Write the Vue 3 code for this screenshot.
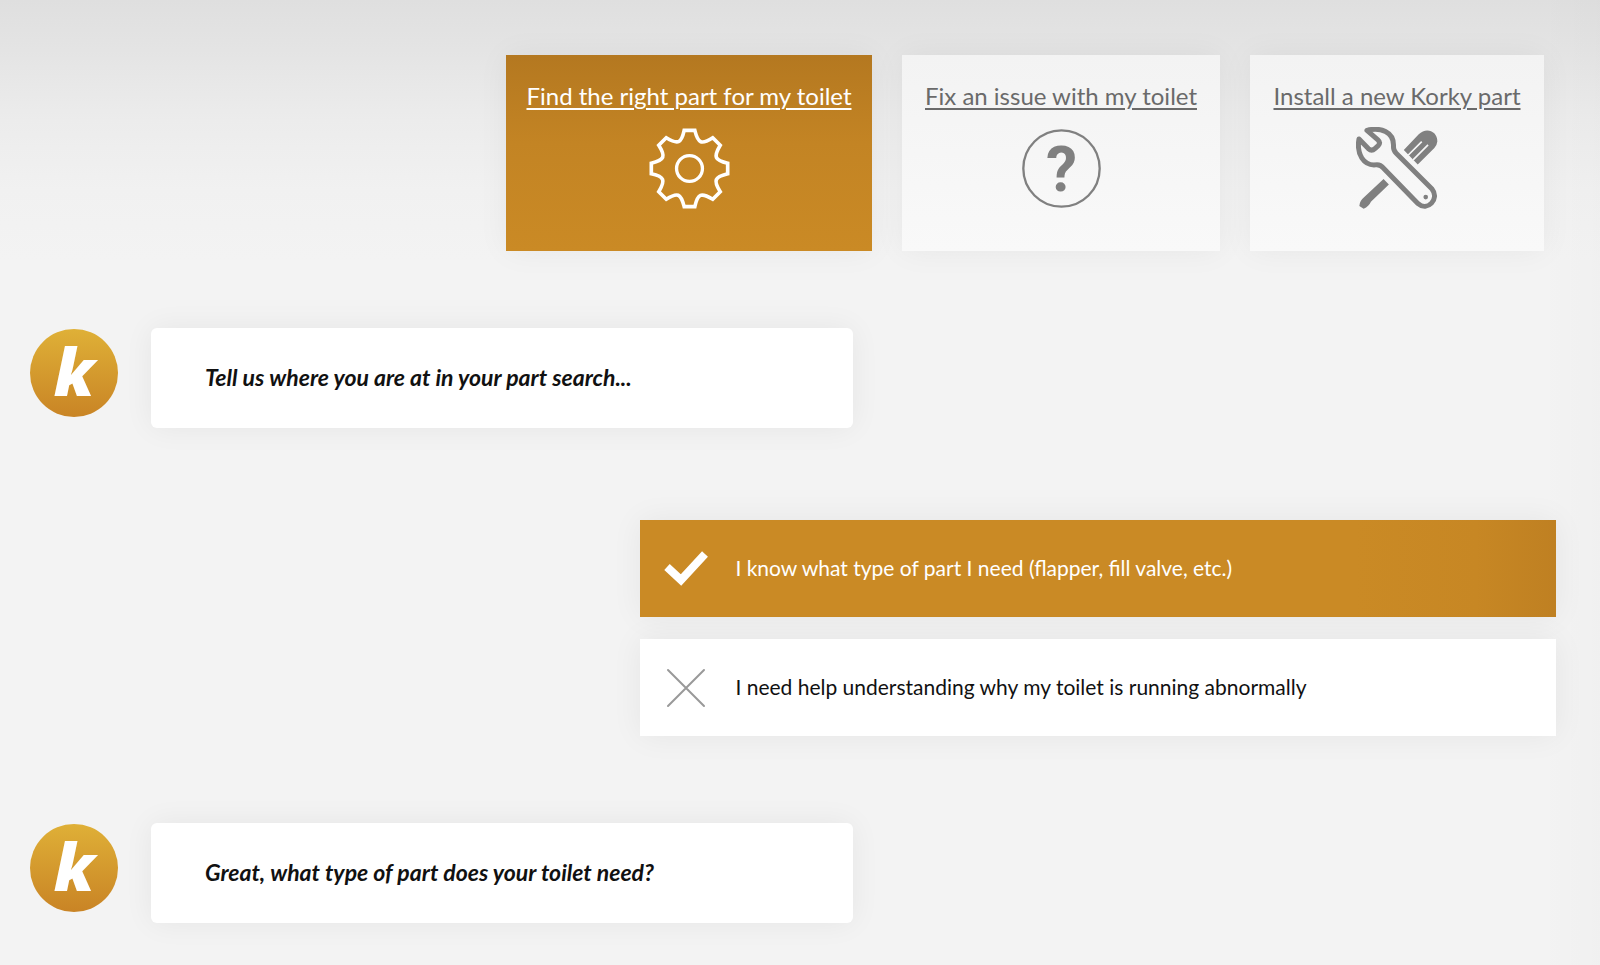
<template>
  <div class="page">
    <!-- topics -->
    <nav class="topics">
      <a
        v-for="topic in topics"
        :key="topic.icon"
        href="#"
        class="topic"
        :class="[topic.icon, { active: topic.icon === activeTopic }]"
        @click.prevent="activeTopic = topic.icon"
      >
        <span class="topic-label">{{ topic.label }}</span>

        <svg v-if="topic.icon === 'gear'" class="topic-icon" viewBox="-125 -125 250 250" aria-hidden="true">
          <path :d="gearPath" fill="none" stroke="currentColor" stroke-width="11" />
          <circle r="39" fill="none" stroke="currentColor" stroke-width="10" />
        </svg>

        <svg v-else-if="topic.icon === 'help'" class="topic-icon" viewBox="-125 -125 250 250" aria-hidden="true">
          <circle r="115" fill="none" stroke="currentColor" stroke-width="7" />
          <text class="mark" y="67" text-anchor="middle" fill="currentColor">?</text>
        </svg>

        <svg v-else class="topic-icon" viewBox="377 260 250 250" aria-hidden="true">
          <path
            d="M410 270 C450 260 492 274 490 318 Q489 330 498 339 L606 447 C630 476 592 516 564 491 L460 384 Q450 372 436 374 C400 377 378 342 386 296 L414 325 Q424 334 434 325 L444 316 Q452 307 443 299 Z"
            fill="none"
            stroke="currentColor"
            stroke-width="15"
            stroke-linejoin="round"
          />
          <circle cx="587" cy="471" r="7" fill="currentColor" />
          <path d="M521 329 L566 282 C588 259 623 272 622 304 Q621 315 613 323 L563 373 Z" fill="currentColor" />
          <path d="M534 345 L575 304 M549 359 L594 314" class="groove" />
          <path d="M460 417 L476 433 L422 485 Q416 499 400 506 L387 498 Q388 482 402 471 Z" fill="currentColor" />
        </svg>
      </a>
    </nav>

    <!-- chat -->
    <main class="chat">
      <div class="question">
        <span class="avatar">k</span>
        <p class="bubble">Tell us where you are at in your part search...</p>
      </div>

      <div class="answers">
        <button
          v-for="(answer, i) in answers"
          :key="answer"
          type="button"
          class="answer"
          :class="{ selected: i === selected }"
          @click="selected = i"
        >
          <svg class="answer-icon" viewBox="0 0 44 44" aria-hidden="true">
            <path v-if="i === selected" d="M3 21 L17 34 L41 8" fill="none" stroke="currentColor" stroke-width="8" />
            <path v-else d="M4 5 L40 41 M40 5 L4 41" class="cross" />
          </svg>
          <span>{{ answer }}</span>
        </button>
      </div>

      <div class="question">
        <span class="avatar">k</span>
        <p class="bubble">Great, what type of part does your toilet need?</p>
      </div>
    </main>
  </div>
</template>

<script setup>
import { ref } from 'vue'

const topics = [
  { icon: 'gear', label: 'Find the right part for my toilet' },
  { icon: 'help', label: 'Fix an issue with my toilet' },
  { icon: 'tools', label: 'Install a new Korky part' }
]

const answers = [
  'I know what type of part I need (flapper, fill valve, etc.)',
  'I need help understanding why my toilet is running abnormally'
]

const activeTopic = ref('gear')
const selected = ref(0)

// one tooth and the hollow after it, turned by 45° eight times
const turn = (x, y, step) => {
  const a = (step * Math.PI) / 4
  const rx = x * Math.cos(a) - y * Math.sin(a)
  const ry = x * Math.sin(a) + y * Math.cos(a)
  return `${rx.toFixed(1)} ${ry.toFixed(1)}`
}

const gearPath = Array.from({ length: 8 }, (_, i) => {
  const start = i === 0 ? `M${turn(-16, -115, 0)}` : ''
  return `${start} L${turn(16, -115, i)} C${turn(26, -75, i)} ${turn(36, -71, i)} ${turn(-16, -115, i + 1)}`
}).join('') + 'Z'
</script>

<style>
body {
  margin: 0;
  background: #f3f3f3;
}
</style>

<style scoped>
.page {
  box-sizing: border-box;
  min-height: 100vh;
  padding: 55px 44px 42px 30px;
  background:
    linear-gradient(to left, rgba(0, 0, 0, 0.01), transparent 60px),
    linear-gradient(to bottom, #dfdfdf 0, #e4e4e4 50px, #ececec 120px, #f1f1f1 190px, #f3f3f3 260px);
  font-family: Lato, "Liberation Sans", sans-serif;
  color: #111;
}

/* topics */
.topics {
  display: flex;
  justify-content: flex-end;
  gap: 30px;
  padding-right: 12px;
}

.topic {
  display: flex;
  flex-direction: column;
  align-items: center;
  gap: 16px;
  box-sizing: border-box;
  height: 196px;
  padding: 26px 0;
  background: linear-gradient(#f3f3f3, #f9f9f9);
  box-shadow: 0 0 30px rgba(0, 0, 0, 0.05);
  color: #808080;
  text-decoration: none;
}

.topic.gear {
  width: 366px;
}

.topic.help {
  width: 318px;
}

.topic.tools {
  width: 294px;
}

.topic.active {
  background: linear-gradient(#b47820, #c38424 45%, #ca8a25);
  color: #fff;
}

.topic-label {
  font-size: 24px;
  line-height: 30px;
  color: #6a6a6a;
  text-decoration: underline;
  text-decoration-thickness: 2px;
  text-underline-offset: 3px;
  white-space: nowrap;
}

.active .topic-label {
  color: #fff;
}

.topic-icon {
  width: 83px;
  height: 83px;
}

.mark {
  font-family: Roboto, sans-serif;
  font-size: 188px;
  font-weight: 700;
}

.groove {
  fill: none;
  stroke: #f6f6f6;
  stroke-width: 5;
}

/* chat */
.question {
  display: flex;
  align-items: flex-start;
  gap: 33px;
  margin-top: 77px;
}

.avatar {
  flex: none;
  width: 88px;
  height: 88px;
  margin-top: 1px;
  border-radius: 50%;
  background: linear-gradient(#dfb037, #c98425);
  color: #fff;
  font-family: "Open Sans", sans-serif;
  font-size: 66px;
  font-style: italic;
  font-weight: 800;
  line-height: 82px;
  text-align: center;
}

.bubble {
  box-sizing: border-box;
  width: 46%;
  margin: 0;
  padding: 34px 54px 36px;
  border-radius: 6px;
  background: #fff;
  box-shadow: 0 0 30px rgba(0, 0, 0, 0.06);
  font-size: 23px;
  font-style: italic;
  font-weight: 700;
  line-height: 30px;
}

.answers {
  display: flex;
  flex-direction: column;
  gap: 22px;
  width: 60%;
  margin-top: 92px;
  margin-left: auto;
}

.answers + .question {
  margin-top: 87px;
}

.answer {
  display: flex;
  align-items: center;
  gap: 27px;
  padding: 26px 24px 27px;
  border: none;
  background: #fff;
  box-shadow: 0 0 30px rgba(0, 0, 0, 0.06);
  color: #111;
  font-family: inherit;
  font-size: 21px;
  line-height: 30px;
  text-align: left;
  cursor: pointer;
}

.answer.selected {
  background: linear-gradient(to left, #bf8022, #c78724 80px, #ca8a25 200px);
  color: #fff;
}

.answer-icon {
  flex: none;
  width: 44px;
  height: 44px;
}

.cross {
  fill: none;
  stroke: #999;
  stroke-width: 2;
  stroke-linecap: round;
}
</style>
